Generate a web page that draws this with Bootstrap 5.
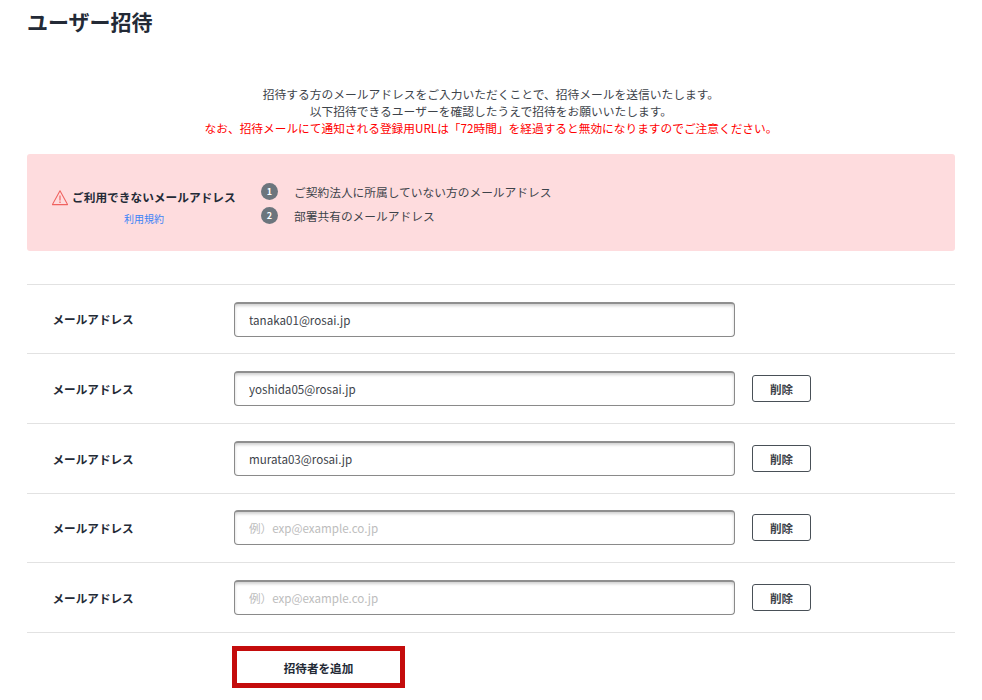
<!DOCTYPE html>
<html lang="ja">

<head>
    <meta charset="UTF-8">
    <meta name="viewport" content="width=device-width, initial-scale=1.0">
    <title>ユーザー招待</title>

    <link href="https://cdn.jsdelivr.net/npm/bootstrap@5.3.0/dist/css/bootstrap.min.css" rel="stylesheet">
    <style>
        body {
            font-family: "Noto Sans CJK JP", "Noto Sans", sans-serif;
            font-size: 11.6px;
            color: #3d434a;
            background: #fff;
        }

        .invite-page {
            padding: 7px 27px 0;
        }

        .invite-title {
            font-size: 21px;
            font-weight: 700;
            line-height: 28px;
            color: #232a36;
            margin: 0 0 49.5px;
        }

        .invite-lead {
            font-size: 11.75px;
            line-height: 17.5px;
            margin-bottom: 17px;
        }

        .invite-red {
            color: #f00;
            font-size: 11.7px;
            margin-top: -.5px;
        }

        .ng-box {
            height: 97px;
            background: #fedcde;
            border-radius: 3px;
            padding: 0 25px;
            margin-bottom: 33.4px;
        }

        .ng-head {
            width: 184px;
            flex-shrink: 0;
            margin-top: 8px;
        }

        .ng-title {
            font-weight: 700;
            font-size: 11.7px;
            line-height: 17px;
            color: #232a36;
            white-space: nowrap;
            margin-bottom: 6px;
        }

        .ng-icon {
            margin-top: 3px;
        }

        .ng-link {
            display: block;
            font-size: 10px;
            line-height: 14px;
            color: #3b82f6;
            text-decoration: none;
        }

        .ng-num {
            width: 17px;
            height: 17px;
            border-radius: 50%;
            background: #6c757d;
            color: #fff;
            font-size: 9px;
            font-weight: 700;
        }

        .ng-list {
            margin-left: 25px;
            margin-top: 3px;
            gap: 6px;
            font-size: 11.73px;
        }

        .mail-row {
            height: 69.6px;
            border-top: 1px solid #e2e2e2;
            padding-left: 25.5px;
        }

        .mail-label {
            width: 181.5px;
            padding-top: 2px;
            font-weight: 700;
            color: #232a36;
        }

        .mail-input {
            width: 501px;
            height: 35px;
            font-size: 11.6px;
            color: #3d434a;
            padding: 0 14px;
            border: 1px solid #8a8a8a;
            border-top: 2px solid #8f8f8f;
            border-radius: 4px;
            box-shadow: inset 0 2px 3px rgba(0, 0, 0, .18);
        }

        .mail-input::placeholder {
            color: #bdbdbd;
        }

        .del-btn {
            width: 59px;
            height: 27px;
            margin-left: 17px;
            padding: 2px 0 0;
            font-size: 11.6px;
            font-weight: 700;
            color: #3d434a;
            background: #fff;
            border: 1px solid #495057;
            border-radius: 3px;
        }

        .add-row {
            border-top: 1px solid #e2e2e2;
            padding: 13px 0 0 205px;
        }

        .add-btn {
            width: 173px;
            height: 42px;
            padding: 3px 0 0;
            font-size: 11.6px;
            font-weight: 700;
            color: #232a36;
            background: #fff;
            border: 5px solid #c40c0c;
            border-radius: 0;
        }
    </style>
</head>

<body>
    <div class="invite-page">
        <h1 class="invite-title">ユーザー招待</h1>

        <div class="invite-lead text-center">
            <div>招待する方のメールアドレスをご入力いただくことで、招待メールを送信いたします。</div>
            <div>以下招待できるユーザーを確認したうえで招待をお願いいたします。</div>
            <div class="invite-red">なお、招待メールにて通知される登録用URLは「72時間」を経過すると無効になりますのでご注意ください。</div>
        </div>

        <div class="ng-box d-flex align-items-center">
            <div class="ng-head text-center">
                <div class="ng-title d-flex align-items-center">
                    <svg width="16" height="16" viewBox="0 0 16 16" fill="none" class="ng-icon me-1 flex-shrink-0">
                        <path d="M8 .8 15.6 14.6H.4Z" stroke="#f0625f" stroke-width="1.1" stroke-linejoin="round" />
                        <path d="M8 5.4v5M8 11.6v1.4" stroke="#f0625f" stroke-width="1.2" />
                    </svg>
                    <span>ご利用できないメールアドレス</span>
                </div>
                <a class="ng-link" href="#">利用規約</a>
            </div>
            <div class="ng-list d-flex flex-column">
                <div class="d-flex align-items-center">
                    <span class="ng-num d-flex align-items-center justify-content-center me-3 flex-shrink-0">1</span>
                    <span>ご契約法人に所属していない方のメールアドレス</span>
                </div>
                <div class="d-flex align-items-center">
                    <span class="ng-num d-flex align-items-center justify-content-center me-3 flex-shrink-0">2</span>
                    <span>部署共有のメールアドレス</span>
                </div>
            </div>
        </div>

        <div class="mail-row d-flex align-items-center">
            <div class="mail-label">メールアドレス</div>
            <input class="mail-input form-control" type="text" value="tanaka01@rosai.jp">
        </div>
        <div class="mail-row d-flex align-items-center">
            <div class="mail-label">メールアドレス</div>
            <input class="mail-input form-control" type="text" value="yoshida05@rosai.jp">
            <button class="del-btn btn" type="button">削除</button>
        </div>
        <div class="mail-row d-flex align-items-center">
            <div class="mail-label">メールアドレス</div>
            <input class="mail-input form-control" type="text" value="murata03@rosai.jp">
            <button class="del-btn btn" type="button">削除</button>
        </div>
        <div class="mail-row d-flex align-items-center">
            <div class="mail-label">メールアドレス</div>
            <input class="mail-input form-control" type="text" placeholder="例）exp@example.co.jp">
            <button class="del-btn btn" type="button">削除</button>
        </div>
        <div class="mail-row d-flex align-items-center">
            <div class="mail-label">メールアドレス</div>
            <input class="mail-input form-control" type="text" placeholder="例）exp@example.co.jp">
            <button class="del-btn btn" type="button">削除</button>
        </div>

        <div class="add-row">
            <button class="add-btn btn" type="button">招待者を追加</button>
        </div>
    </div>

    <script src="https://cdn.jsdelivr.net/npm/bootstrap@5.3.0/dist/js/bootstrap.bundle.min.js"></script>
</body>

</html>
